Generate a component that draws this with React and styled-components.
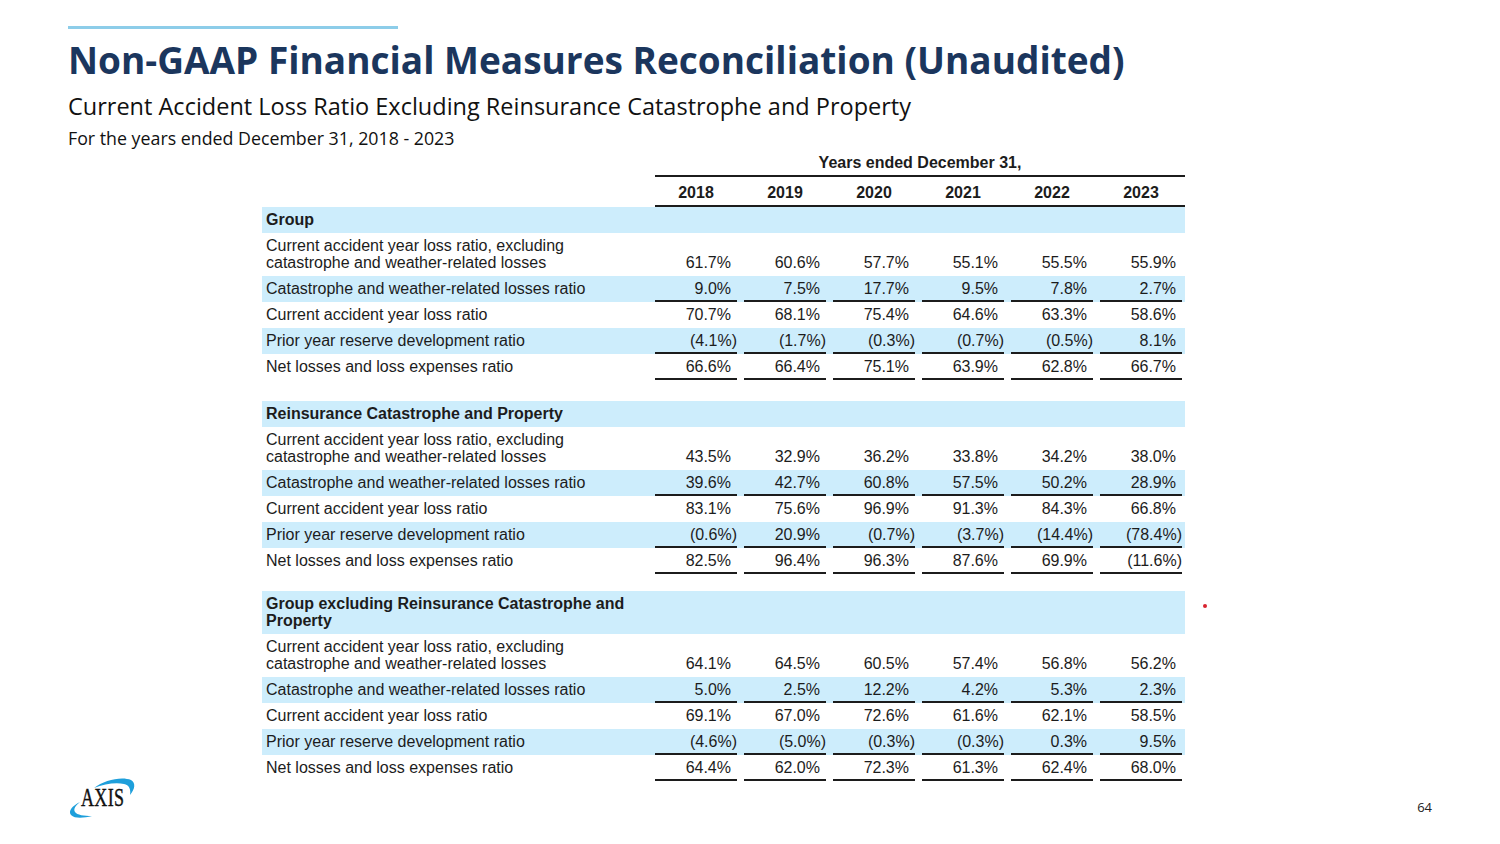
import React from 'react';
import styled, { createGlobalStyle } from 'styled-components';

const GlobalStyle = createGlobalStyle`
  html, body {
    margin: 0;
    padding: 0;
    background: #ffffff;
  }
`;

const YEARS = ['2018', '2019', '2020', '2021', '2022', '2023'];

const SECTIONS = [
  {
    title: 'Group',
    rows: [
      ['61.7%', '60.6%', '57.7%', '55.1%', '55.5%', '55.9%'],
      ['9.0%', '7.5%', '17.7%', '9.5%', '7.8%', '2.7%'],
      ['70.7%', '68.1%', '75.4%', '64.6%', '63.3%', '58.6%'],
      ['(4.1%)', '(1.7%)', '(0.3%)', '(0.7%)', '(0.5%)', '8.1%'],
      ['66.6%', '66.4%', '75.1%', '63.9%', '62.8%', '66.7%'],
    ],
  },
  {
    title: 'Reinsurance Catastrophe and Property',
    rows: [
      ['43.5%', '32.9%', '36.2%', '33.8%', '34.2%', '38.0%'],
      ['39.6%', '42.7%', '60.8%', '57.5%', '50.2%', '28.9%'],
      ['83.1%', '75.6%', '96.9%', '91.3%', '84.3%', '66.8%'],
      ['(0.6%)', '20.9%', '(0.7%)', '(3.7%)', '(14.4%)', '(78.4%)'],
      ['82.5%', '96.4%', '96.3%', '87.6%', '69.9%', '(11.6%)'],
    ],
  },
  {
    title: 'Group excluding Reinsurance Catastrophe and Property',
    marker: true,
    rows: [
      ['64.1%', '64.5%', '60.5%', '57.4%', '56.8%', '56.2%'],
      ['5.0%', '2.5%', '12.2%', '4.2%', '5.3%', '2.3%'],
      ['69.1%', '67.0%', '72.6%', '61.6%', '62.1%', '58.5%'],
      ['(4.6%)', '(5.0%)', '(0.3%)', '(0.3%)', '0.3%', '9.5%'],
      ['64.4%', '62.0%', '72.3%', '61.3%', '62.4%', '68.0%'],
    ],
  },
];

// label, shaded, underlined
const ROW_META = [
  ['Current accident year loss ratio, excluding\ncatastrophe and weather-related losses', false, false],
  ['Catastrophe and weather-related losses ratio', true, true],
  ['Current accident year loss ratio', false, false],
  ['Prior year reserve development ratio', true, true],
  ['Net losses and loss expenses ratio', false, true],
];

function AxisLogo() {
  return (
    <svg width="68" height="46" viewBox="0 0 68 46" overflow="visible">
      <path
        d="M26,12 C36,4 54,0 63,4 C68,7 67,13 62,19 C63,13 61,9 56,8 C48,6 36,8 26,12 Z"
        fill="#1e9fdb"
      />
      <path
        d="M12,26 C4,30 0,35 3,39 C7,43 16,42 24,40 C16,40 9,39 7,36 C5,33 8,29 12,26 Z"
        fill="#1e9fdb"
      />
      <g transform="translate(13 30) scale(0.72 1)">
        <text
          x="0"
          y="0"
          fontFamily="'Liberation Serif', serif"
          fontSize="25"
          fill="#111"
          stroke="#111"
          strokeWidth="0.4"
          letterSpacing="0.5"
        >
          AXIS
        </text>
      </g>
    </svg>
  );
}

export default function App() {
  return (
    <Slide>
      <GlobalStyle />
      <AccentBar />
      <Title>Non-GAAP Financial Measures Reconciliation (Unaudited)</Title>
      <Subtitle>Current Accident Loss Ratio Excluding Reinsurance Catastrophe and Property</Subtitle>
      <Period>For the years ended December 31, 2018 - 2023</Period>

      <Table>
        <RowGrid>
          <Label />
          <SpanHead>Years ended December 31,</SpanHead>
        </RowGrid>
        <RowGrid>
          <Label />
          <YearStrip>
            {YEARS.map((y, i) => (
              <YearHead key={y} $first={i === 0}>
                {y}
              </YearHead>
            ))}
          </YearStrip>
        </RowGrid>

        {SECTIONS.map((section, si) => (
          <Section key={section.title} $gap={si === 0 ? 0 : si === 1 ? 21 : 17}>
            <Row $shaded>
              <Label $bold>{section.title}</Label>
              {section.marker && <Marker />}
            </Row>
            {section.rows.map((values, ri) => {
              const [label, shaded, underlined] = ROW_META[ri];
              return (
                <Row key={ri} $shaded={shaded}>
                  <Label>{label}</Label>
                  {values.map((v, ci) => (
                    <Cell key={ci}>
                      <Value $underline={underlined} $neg={v.startsWith('(')}>
                        {v}
                      </Value>
                    </Cell>
                  ))}
                </Row>
              );
            })}
          </Section>
        ))}
      </Table>

      <Footer>
        <AxisLogo />
        <PageNumber>64</PageNumber>
      </Footer>
    </Slide>
  );
}

const Slide = styled.div`
  width: 1500px;
  height: 844px;
  box-sizing: border-box;
  padding: 0 68px;
  display: flex;
  flex-direction: column;
  overflow: hidden;
  background: #ffffff;

  & > * {
    flex-shrink: 0;
  }
`;

const AccentBar = styled.div`
  width: 330px;
  height: 3px;
  margin-top: 26px;
  background: #8dcde9;
`;

const Title = styled.h1`
  margin: 8px 0 0;
  font-family: 'Open Sans', 'Noto Sans', sans-serif;
  font-weight: 700;
  font-size: 37px;
  line-height: 46px;
  color: #1b365d;
`;

const Subtitle = styled.div`
  margin-top: 8px;
  font-family: 'Open Sans', 'Noto Sans', sans-serif;
  font-size: 23.5px;
  line-height: 30px;
  color: #111111;
`;

const Period = styled.div`
  margin-top: 5px;
  font-family: 'Open Sans', 'Noto Sans', sans-serif;
  font-size: 17.8px;
  line-height: 24px;
  color: #111111;
`;

const Table = styled.div`
  margin: 0 0 0 194px;
  width: 923px;
  font-family: 'Liberation Sans', Arial, sans-serif;
  font-size: 16px;
  color: #1c1c1c;
`;

const RowGrid = styled.div`
  display: grid;
  grid-template-columns: 389px repeat(6, 89px);
  align-items: end;
`;

const Section = styled.div`
  margin-top: ${(p) => p.$gap}px;
`;

const Row = styled(RowGrid)`
  position: relative;
  background: ${(p) => (p.$shaded ? '#cdedfc' : 'transparent')};
`;

const Label = styled.div`
  padding: 4px 4px 5px;
  line-height: 17px;
  white-space: pre-line;
  font-weight: ${(p) => (p.$bold ? 700 : 400)};
`;

const Cell = styled.div`
  padding: 0 3px 0 4px;
`;

const SpanHead = styled.div`
  grid-column: 2 / span 6;
  margin-left: 4px;
  padding: 4px 0 4px;
  line-height: 17px;
  text-align: center;
  font-weight: 700;
  border-bottom: 2px solid #1c1c1c;
`;

const YearStrip = styled.div`
  grid-column: 2 / span 6;
  margin-left: 4px;
  display: grid;
  grid-template-columns: 85px repeat(5, 89px);
  border-bottom: 2px solid #1c1c1c;
`;

const YearHead = styled.div`
  padding: 7px 3px 4px ${(p) => (p.$first ? 0 : 4)}px;
  line-height: 17px;
  text-align: center;
  font-weight: 700;
`;

const Value = styled.div`
  padding: 4px ${(p) => (p.$neg ? 0 : 6)}px ${(p) => (p.$underline ? 3 : 5)}px 0;
  line-height: 17px;
  text-align: right;
  white-space: nowrap;
  border-bottom: ${(p) => (p.$underline ? '2px solid #1c1c1c' : 'none')};
`;

const Marker = styled.span`
  position: absolute;
  right: -22px;
  top: 13px;
  width: 4px;
  height: 4px;
  border-radius: 50%;
  background: #d8232f;
`;

const Footer = styled.div`
  margin-top: -5px;
  display: flex;
  align-items: center;
  justify-content: space-between;
`;

const PageNumber = styled.div`
  font-family: 'Open Sans', 'Noto Sans', sans-serif;
  font-size: 13px;
  color: #222;
  padding-top: 16px;
`;
